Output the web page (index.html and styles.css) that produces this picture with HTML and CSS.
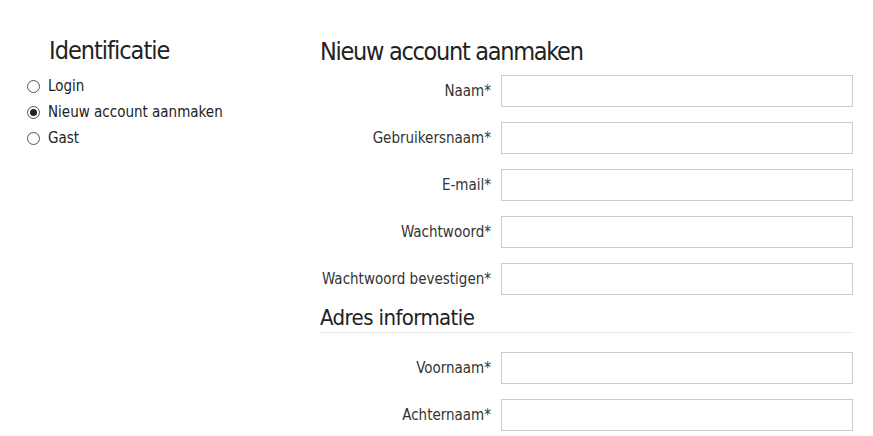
FILE: index.html
```html
<!DOCTYPE html>
<html>
<head>
<meta charset="utf-8">
<link rel="stylesheet" href="styles.css">
</head>
<body>
<div class="page">
  <aside class="side">
    <h2 class="side-title">Identificatie</h2>
    <ul class="radios">
      <li class="radio-row"><span class="radio"></span><span>Login</span></li>
      <li class="radio-row"><span class="radio checked"></span><span>Nieuw account aanmaken</span></li>
      <li class="radio-row"><span class="radio"></span><span>Gast</span></li>
    </ul>
  </aside>
  <main class="main">
    <h1 class="main-title">Nieuw account aanmaken</h1>
    <div class="form">
      <div class="row"><label class="lbl">Naam*</label><span class="field"></span></div>
      <div class="row"><label class="lbl">Gebruikersnaam*</label><span class="field"></span></div>
      <div class="row"><label class="lbl">E-mail*</label><span class="field"></span></div>
      <div class="row"><label class="lbl">Wachtwoord*</label><span class="field"></span></div>
      <div class="row"><label class="lbl">Wachtwoord bevestigen*</label><span class="field"></span></div>
    </div>
    <h3 class="section">Adres informatie</h3>
    <div class="form form2">
      <div class="row"><label class="lbl">Voornaam*</label><span class="field"></span></div>
      <div class="row"><label class="lbl">Achternaam*</label><span class="field"></span></div>
    </div>
  </main>
</div>
</body>
</html>
```
FILE: styles.css
```css
html, body { margin: 0; padding: 0; background: #fff; }
body {
  font-family: "DejaVu Sans Condensed", "DejaVu Sans", sans-serif;
  color: #333;
  overflow: hidden;
}
.page {
  display: flex;
  padding: 0 20px 0 27px;
}
.side { width: 293px; flex: none; }
.side-title {
  margin: 35px 0 0 22px;
  font-weight: normal;
  font-size: 25px;
  line-height: 32px;
  letter-spacing: -1px;
  color: #222;
}
.radios { list-style: none; margin: 6px 0 0 0; padding: 0; }
.radio-row {
  display: flex;
  align-items: center;
  height: 26px;
  font-size: 15px;
  color: #222;
}
.radio {
  width: 11px; height: 11px;
  border: 1px solid #555;
  border-radius: 50%;
  margin-right: 8px;
  position: relative;
  flex: none;
}
.radio.checked::after {
  content: "";
  position: absolute;
  left: 2px; top: 2px;
  width: 7px; height: 7px;
  border-radius: 50%;
  background: #222;
}
.main { flex: 1; }
.main-title {
  margin: 36px 0 0 0;
  font-weight: normal;
  font-size: 25px;
  line-height: 32px;
  letter-spacing: -1.3px;
  color: #222;
}
.form { margin-top: 7px; display: flex; flex-direction: column; gap: 15px; }
.row { display: flex; align-items: center; }
.lbl {
  width: 171px;
  text-align: right;
  padding-right: 10px;
  font-size: 15px;
  color: #333;
  flex: none;
}
.field {
  flex: 1;
  height: 30px;
  border: 1px solid #ccc;
  display: block;
}
.section {
  margin: 9px 0 0 0;
  font-weight: normal;
  font-size: 22px;
  line-height: 28px;
  letter-spacing: -0.6px;
  color: #222;
  border-bottom: 1px solid #e5e5e5;
}
.form2 { margin-top: 19px; }
```
